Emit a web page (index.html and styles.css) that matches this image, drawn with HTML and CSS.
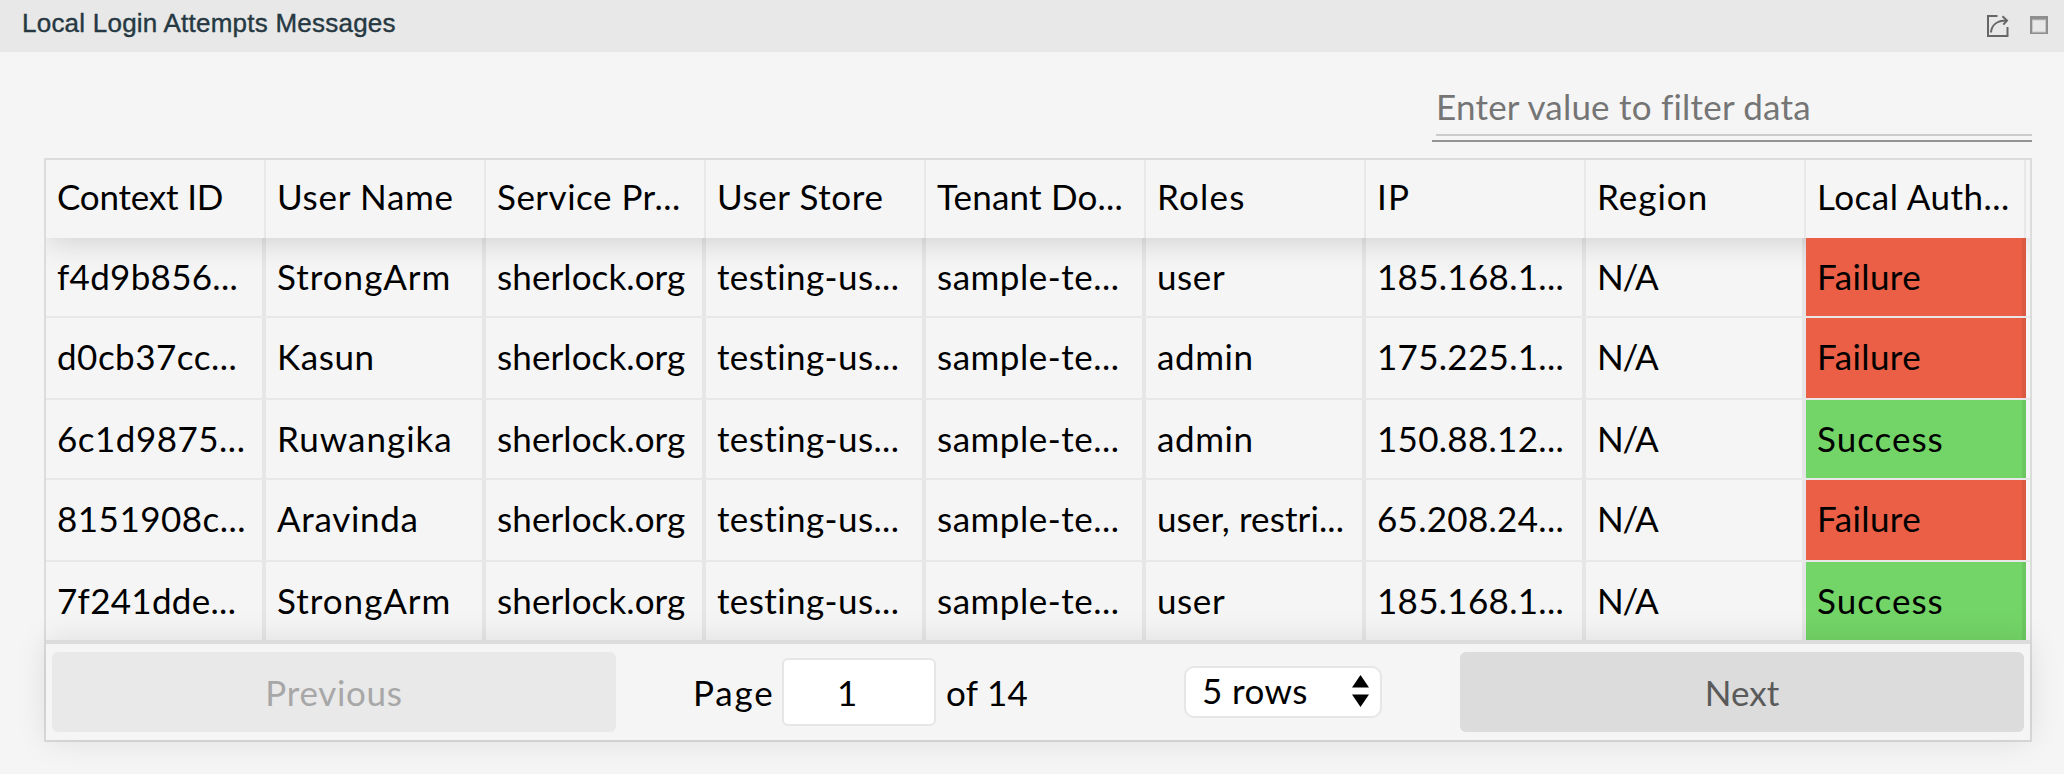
FILE: index.html
```
<!DOCTYPE html>
<html lang="en">
<head>
<meta charset="utf-8">
<title>Local Login Attempts Messages</title>
<link rel="stylesheet" href="styles.css">
</head>
<body>
<header class="titlebar">
  <h1 class="title">Local Login Attempts Messages</h1>
  <div class="actions">
    <svg class="icon-share" width="22" height="22" viewBox="0 0 22 22" fill="none" stroke="#666">
      <path d="M10.5 1H1V21H20.5V12" stroke-width="2"/>
      <path d="M4 17.5C4.500 10 10 5.500 19.500 5.500" stroke-width="2"/>
      <path d="M15.500 1.200L20 5.500L16.300 9.600" stroke-width="2"/>
    </svg>
    <svg class="icon-window" width="18" height="18" viewBox="0 0 18 18">
      <path d="M0 0H18V18H0Z" fill="#8e8e8e"/>
      <path d="M2 3.500H16V16.500H2Z" fill="#c8c8c8"/>
      <path d="M3 4.500H15V15.500H3Z" fill="#e8e8e8"/>
    </svg>
  </div>
</header>
<main class="content">
  <div class="filter"><div class="filter-text">Enter value to filter data</div></div>
  <section class="table">
    <div class="grid">
      <div class="row head">
        <div class="cell"><span class="tn2">Context ID</span></div>
        <div class="cell"><span class="t7">User Name</span></div>
        <div class="cell"><span class="t5">Service Pr...</span></div>
        <div class="cell"><span class="t6">User Store</span></div>
        <div class="cell"><span class="t2">Tenant Do...</span></div>
        <div class="cell"><span class="t12">Roles</span></div>
        <div class="cell"><span class="t12">IP</span></div>
        <div class="cell"><span class="t10">Region</span></div>
        <div class="cell"><span class="t5">Local Auth...</span></div>
      </div>
      <div class="body">
        <div class="row">
          <div class="cell"><span class="t3">f4d9b856...</span></div>
          <div class="cell"><span class="t10">StrongArm</span></div>
          <div class="cell"><span class="t1">sherlock.org</span></div>
          <div class="cell"><span class="t4">testing-us...</span></div>
          <div class="cell"><span class="t5">sample-te...</span></div>
          <div class="cell"><span class="t6">user</span></div>
          <div class="cell"><span class="t3">185.168.1...</span></div>
          <div class="cell"><span class="tn13">N/A</span></div>
          <div class="cell failure"><span class="t4">Failure</span></div>
        </div>
        <div class="row tall">
          <div class="cell"><span class="t5">d0cb37cc...</span></div>
          <div class="cell"><span class="t6">Kasun</span></div>
          <div class="cell"><span class="t1">sherlock.org</span></div>
          <div class="cell"><span class="t4">testing-us...</span></div>
          <div class="cell"><span class="t5">sample-te...</span></div>
          <div class="cell"><span class="t6">admin</span></div>
          <div class="cell"><span class="t3">175.225.1...</span></div>
          <div class="cell"><span class="tn13">N/A</span></div>
          <div class="cell failure"><span class="t4">Failure</span></div>
        </div>
        <div class="row">
          <div class="cell"><span class="t5">6c1d9875...</span></div>
          <div class="cell"><span class="t10">Ruwangika</span></div>
          <div class="cell"><span class="t1">sherlock.org</span></div>
          <div class="cell"><span class="t4">testing-us...</span></div>
          <div class="cell"><span class="t5">sample-te...</span></div>
          <div class="cell"><span class="t6">admin</span></div>
          <div class="cell"><span class="t3">150.88.12...</span></div>
          <div class="cell"><span class="tn13">N/A</span></div>
          <div class="cell success"><span class="t10">Success</span></div>
        </div>
        <div class="row tall">
          <div class="cell"><span class="t5">8151908c...</span></div>
          <div class="cell"><span class="t7">Aravinda</span></div>
          <div class="cell"><span class="t1">sherlock.org</span></div>
          <div class="cell"><span class="t4">testing-us...</span></div>
          <div class="cell"><span class="t5">sample-te...</span></div>
          <div class="cell"><span class="t1">user, restri...</span></div>
          <div class="cell"><span class="t3">65.208.24...</span></div>
          <div class="cell"><span class="tn13">N/A</span></div>
          <div class="cell failure"><span class="t4">Failure</span></div>
        </div>
        <div class="row last">
          <div class="cell"><span class="t3">7f241dde...</span></div>
          <div class="cell"><span class="t10">StrongArm</span></div>
          <div class="cell"><span class="t1">sherlock.org</span></div>
          <div class="cell"><span class="t4">testing-us...</span></div>
          <div class="cell"><span class="t5">sample-te...</span></div>
          <div class="cell"><span class="t6">user</span></div>
          <div class="cell"><span class="t3">185.168.1...</span></div>
          <div class="cell"><span class="tn13">N/A</span></div>
          <div class="cell success"><span class="t10">Success</span></div>
        </div>
      </div>
    </div>
    <footer class="pagination">
      <div class="btn previous"><span class="t7">Previous</span></div>
      <div class="center">
        <div class="page-info">
          <span class="page-label">Page</span>
          <div class="page-input">1</div>
          <span class="t3">of 14</span>
        </div>
        <div class="page-size">
          <span class="t4">5 rows</span>
          <svg width="17" height="32" viewBox="0 0 17 32"><path d="M8.500 0L17 12.500H0ZM0 19.500H17L8.500 32Z" fill="#000"/></svg>
        </div>
      </div>
      <div class="btn next">Next</div>
    </footer>
  </section>
</main>
</body>
</html>
```
FILE: styles.css
```
* { box-sizing: border-box; }
body {
  margin: 0;
  height: 774px;
  overflow: hidden;
  background: #f5f5f5;
  color: #000;
  font: 35px/40px Lato, "Open Sans", sans-serif;
}
.titlebar {
  display: flex;
  justify-content: space-between;
  height: 52px;
  padding: 0 16px 0 22px;
  background: #e8e8e8;
}
.title {
  margin: 8px 0 0;
  font: 400 26px/30px "Liberation Sans", Arial, sans-serif;
  letter-spacing: 0.23px;
  color: #263842;
  -webkit-text-stroke: 0.4px #263842;
}
.actions { display: flex; gap: 21px; }
.icon-share { margin-top: 15px; }
.icon-window { margin-top: 16px; }

.content { padding: 0 32px 0 44px; }
.filter {
  width: 600px;
  height: 90px;
  margin: 0 0 16px auto;
  padding: 34px 0 0 4px;
  border-bottom: 2px solid #949494;
}
.filter-text {
  height: 50px;
  border-bottom: 2px solid #ccc;
  color: #757575;
  letter-spacing: 0.22px;
}

.table {
  border: 2px solid #dcdcdc;
  height: 584px;
}
.grid { height: 480px; overflow: hidden; }
.row {
  display: grid;
  grid-template-columns: repeat(9, 220px);
  height: 80px;
  border-bottom: 2px solid #e8e8e8;
}
.row.tall { height: 82px; }
.row.last { height: 78px; border-bottom: 0; }
.cell {
  padding: 18px 0 0 11px;
  border-right: 4px solid rgba(0, 0, 0, 0.06);
  white-space: nowrap;
}
.row.head {
  height: 78px;
  border-bottom: 0;
  box-shadow: 0 4px 30px 0 rgba(0, 0, 0, 0.15);
}
.head .cell { padding-top: 16px; border-right: 2px solid rgba(0, 0, 0, 0.05); }
.failure { background: #ea5f46; }
.success { background: #73d467; }

.pagination {
  display: grid;
  grid-template-columns: 564px 844px 564px;
  height: 100px;
  padding: 8px 6px;
  position: relative;
  z-index: 1;
  border-top: 4px solid #dcdcdc;
  box-shadow: 0 0 30px 0 rgba(0, 0, 0, 0.1);
}
.btn {
  height: 80px;
  padding-top: 20px;
  border-radius: 6px;
  text-align: center;
}
.previous { background: #e9e9e9; color: #a7a7a7; }
.next { background: #dcdcdc; color: #5a5a5a; }
.center { display: flex; align-items: flex-start; }
.page-info { display: flex; width: 568px; padding: 6px 0 0 77px; }
.page-info > span { padding-top: 14px; }
.page-label { width: 89px; letter-spacing: 1.8px; }
.page-input {
  width: 154px;
  height: 68px;
  margin-right: 10px;
  padding: 12px 0 0 53px;
  border: 2px solid #e6e6e6;
  border-radius: 6px;
  background: #fff;
}
.page-size {
  display: flex;
  justify-content: space-between;
  width: 198px;
  height: 52px;
  margin-top: 14px;
  padding: 0 11px 0 16px;
  border: 2px solid #e6e6e6;
  border-radius: 10px;
  background: #fff;
}
.page-size span { padding-top: 2px; }
.page-size svg { margin-top: 7px; }

/* tracking steps, in tenths of a pixel */
.tn13 { letter-spacing: -1.3px; }
.tn2 { letter-spacing: -0.2px; }
.t1 { letter-spacing: 0.1px; }
.t2 { letter-spacing: 0.2px; }
.t3 { letter-spacing: 0.3px; }
.t4 { letter-spacing: 0.4px; }
.t5 { letter-spacing: 0.5px; }
.t6 { letter-spacing: 0.6px; }
.t7 { letter-spacing: 0.7px; }
.t10 { letter-spacing: 1px; }
.t12 { letter-spacing: 1.2px; }
```
